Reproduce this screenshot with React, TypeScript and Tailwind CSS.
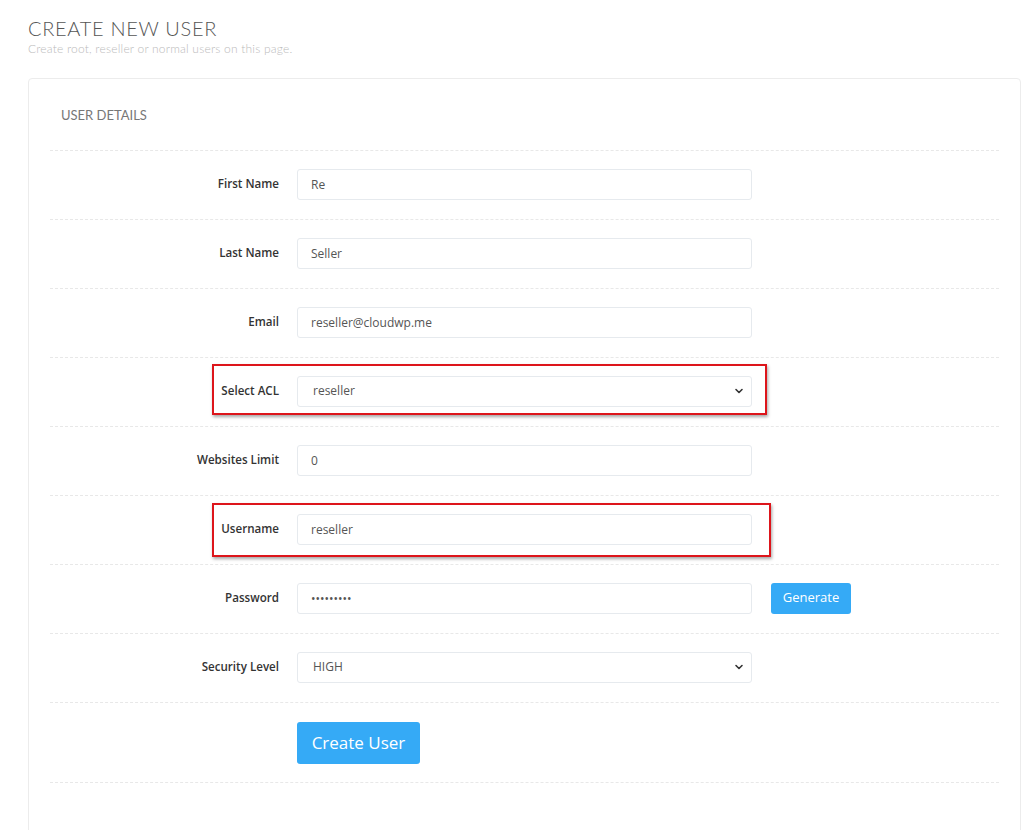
import React from 'react';

const Chevron: React.FC = () => (
  <svg width="10" height="10" viewBox="0 0 10 10" className="pointer-events-none absolute right-[8px] top-1/2 -translate-y-1/2">
    <path d="M2 3.5 L5 6.5 L8 3.5" fill="none" stroke="#333" strokeWidth="1.6" strokeLinecap="round" strokeLinejoin="round" />
  </svg>
);

const Row: React.FC<{ label: string; children: React.ReactNode; mark?: string }> = ({ label, children, mark }) => (
  <div className="relative flex items-center border-t border-dashed border-[#e8e8e8] pt-[18px] pb-[19px]">
    <label className="w-[247px] shrink-0 pr-[18px] text-right text-[11.6px] font-semibold text-[#333]">{label}</label>
    {children}
    {mark && <div className={`pointer-events-none absolute left-[162px] border-2 border-[#dd151b] shadow-[1px_2px_3px_rgba(0,0,0,0.35)] ${mark}`} />}
  </div>
);

const inputCls =
  'h-[31px] w-[455px] rounded-[3px] border border-[#e6eaee] bg-white px-[13px] text-[12px] text-[#555] outline-none';

const App: React.FC = () => {
  return (
    <div className="min-h-[830px] bg-white pl-[28px] pr-[3px] pt-[17px]" style={{ fontFamily: '"Open Sans", sans-serif' }}>
      <h1 className="text-[20px] font-light leading-[22px] tracking-[0.7px] text-[#555]" style={{ fontFamily: 'Lato, "Open Sans", sans-serif' }}>
        CREATE NEW USER
      </h1>
      <p className="mt-[1px] text-[12px] font-light tracking-[0.2px] text-[#bbb]" style={{ fontFamily: 'Lato, "Open Sans", sans-serif' }}>
        Create root, reseller or normal users on this page.
      </p>

      <div className="mt-[20px] h-[760px] rounded-[4px] border border-[#ececec] px-[21px]">
        <h2 className="pl-[11px] pt-[27px] pb-[24px] text-[13px] font-normal text-[#777]" style={{ fontFamily: 'Lato, "Open Sans", sans-serif' }}>
          USER DETAILS
        </h2>

        <Row label="First Name">
          <input className={inputCls} defaultValue="Re" />
        </Row>
        <Row label="Last Name">
          <input className={inputCls} defaultValue="Seller" />
        </Row>
        <Row label="Email">
          <input className={inputCls} defaultValue="reseller@cloudwp.me" />
        </Row>
        <Row label="Select ACL" mark="top-[6px] h-[51px] w-[555px]">
          <div className="relative">
            <select className={`${inputCls} appearance-none pl-[15px]`} defaultValue="reseller">
              <option>reseller</option>
            </select>
            <Chevron />
          </div>
        </Row>
        <Row label="Websites Limit">
          <input className={inputCls} defaultValue="0" />
        </Row>
        <Row label="Username" mark="top-[7px] h-[54px] w-[559px]">
          <input className={inputCls} defaultValue="reseller" />
        </Row>
        <Row label="Password">
          <input className={inputCls} type="password" defaultValue="123456789" />
          <button className="ml-[19px] h-[31px] w-[80px] rounded-[3px] bg-[#35aaf6] text-[13px] text-white">Generate</button>
        </Row>
        <Row label="Security Level">
          <div className="relative">
            <select className={`${inputCls} appearance-none pl-[15px]`} defaultValue="HIGH">
              <option>HIGH</option>
            </select>
            <Chevron />
          </div>
        </Row>
        <div className="flex border-t border-dashed border-[#e8e8e8] pt-[19px] pb-[18px] pl-[247px]">
          <button className="h-[42px] w-[123px] rounded-[3px] bg-[#35aaf6] text-[17px] text-white">Create User</button>
        </div>
        <div className="border-t border-dashed border-[#e8e8e8]" />
      </div>
    </div>
  );
};

export default App;
